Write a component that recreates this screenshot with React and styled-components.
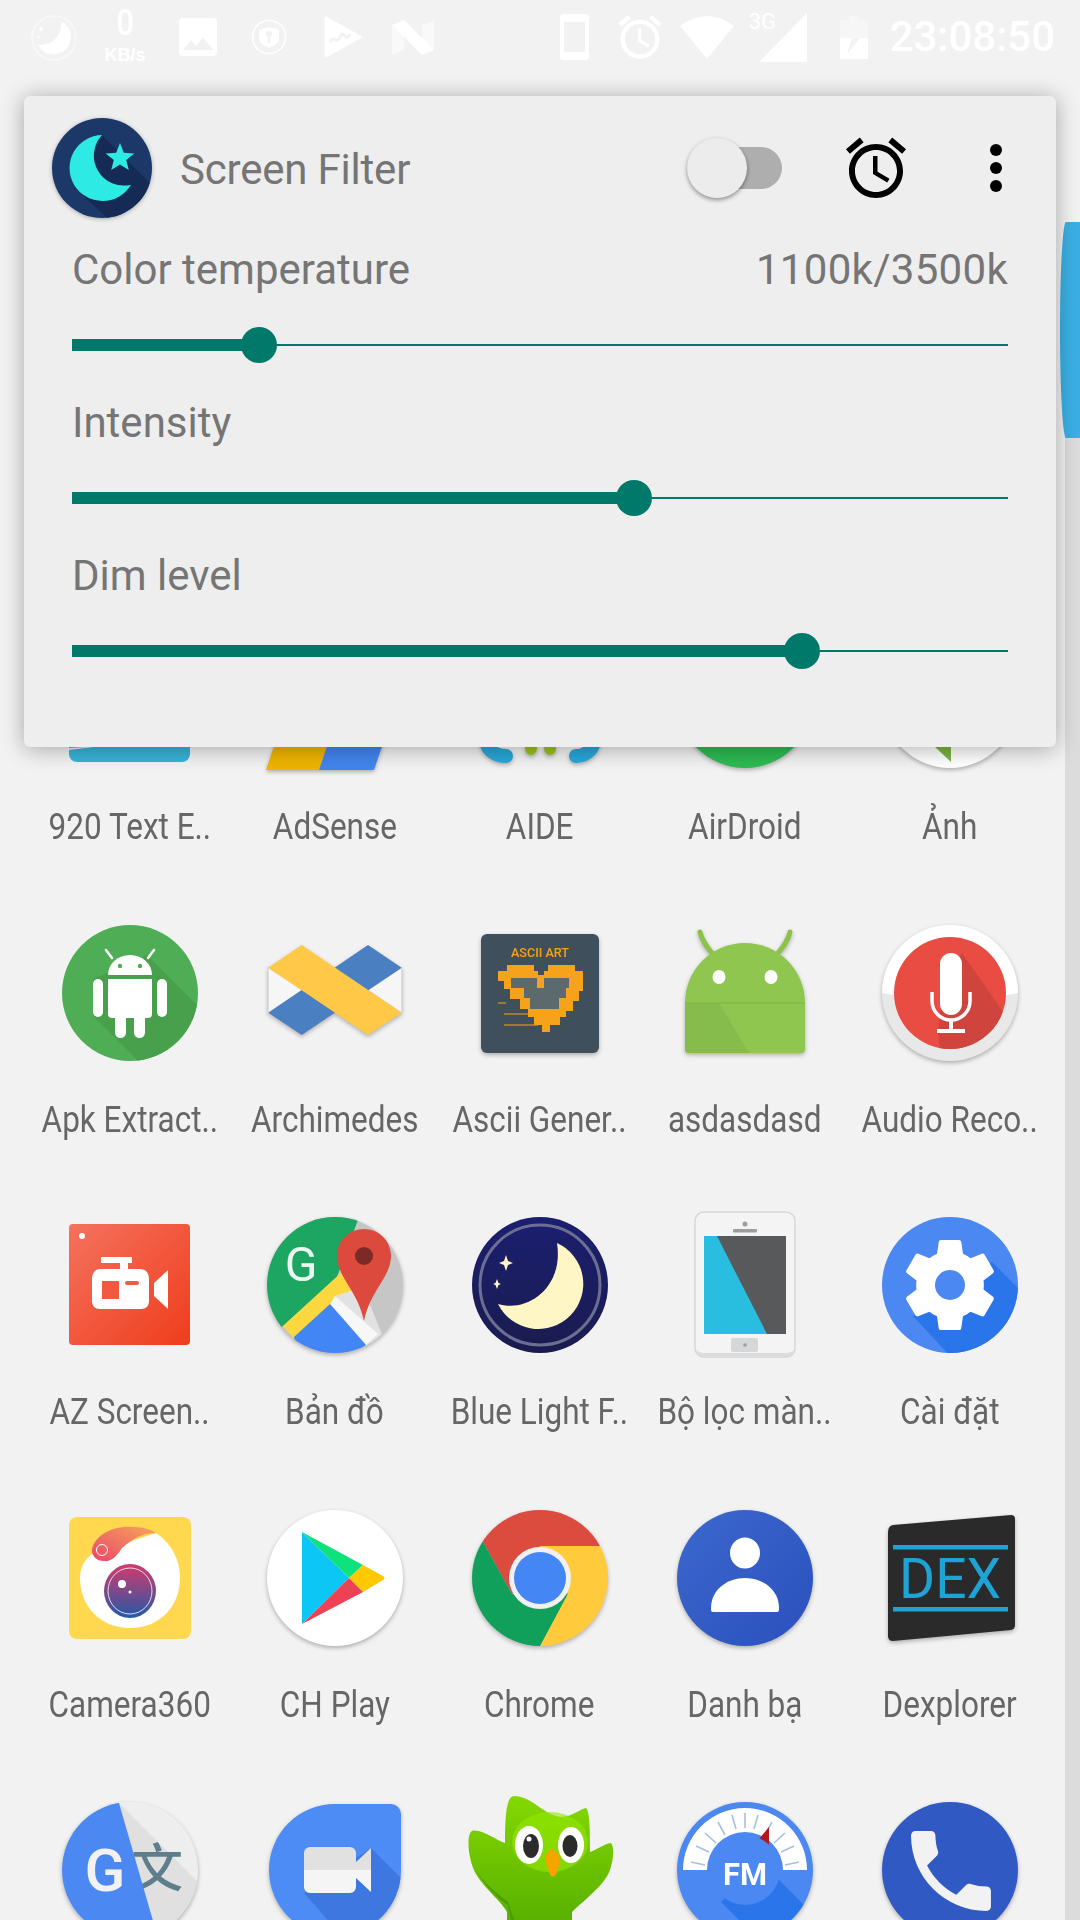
// node modules
import React from 'react';
import styled, { createGlobalStyle } from 'styled-components';

const GlobalStyle = createGlobalStyle`
    html, body {
        margin: 0;
        padding: 0;
        background: #f2f2f2;
        font-family: Roboto, "Noto Sans", sans-serif;
    }
`;

// styled css components
const Page = styled.div`
    position: relative;
    width: 1080px;
    height: 1920px;
    overflow: hidden;
    background: #f2f2f2;
`;
const StatusBar = styled.div`
    display: flex;
    align-items: center;
    height: 74px;
    padding: 0 25px 0 31px;
    box-sizing: border-box;
    color: #fff;
`;
const StatusIcon = styled.svg`
    display: block;
    flex: none;
    margin-left: ${props => props.$gap || 0}px;
    fill: #fff;
`;
const NetSpeed = styled.div`
    display: flex;
    flex-direction: column;
    align-items: center;
    width: 50px;
    margin: -3px 0 0 24px;
`;
const NetValue = styled.span`
    font-size: 36px;
    line-height: 32px;
    font-weight: 500;
    transform: scaleX(0.85);
`;
const NetUnit = styled.span`
    margin-top: 6px;
    font-size: 18px;
    line-height: 20px;
    font-weight: 700;
    font-family: "Liberation Sans", sans-serif;
    white-space: nowrap;
`;
const StatusRight = styled.div`
    display: flex;
    align-items: center;
    margin-left: auto;
`;
const SignalWrap = styled.div`
    position: relative;
    width: 48px;
    height: 49px;
    margin-left: 25px;
`;
const NetType = styled.span`
    position: absolute;
    left: -10px;
    top: -3px;
    font-size: 22px;
    line-height: 24px;
`;
const Clock = styled.span`
    margin-left: 22px;
    font-size: 42px;
    line-height: 50px;
    font-weight: 500;
`;

const Grid = styled.div`
    display: grid;
    grid-template-columns: repeat(5, 205px);
    grid-auto-rows: 292.5px;
    margin-top: 558px;
    padding-left: 27px;
`;
const Cell = styled.div`
    display: flex;
    flex-direction: column;
    align-items: center;
`;
const AppIcon = styled.svg`
    display: block;
    flex: none;
    width: 136px;
    height: 136px;
    overflow: visible;
    filter: ${props => props.$flat ? 'none' : 'drop-shadow(0 2px 2px rgba(0, 0, 0, 0.28))'};
`;
const CellLabel = styled.span`
    margin-top: 35px;
    font-size: 36px;
    line-height: 48px;
    color: #666;
    white-space: nowrap;
    transform: scaleX(0.875);
`;

const ScrollTrack = styled.div`
    position: absolute;
    right: 0;
    top: 222px;
    bottom: 0;
    width: 15px;
    background: #dcdcdc;
`;
const ScrollThumb = styled.div`
    position: absolute;
    right: 0;
    top: 222px;
    width: 20px;
    height: 216px;
    background: #3bafe3;
    border-radius: 6px 0 0 6px / 50% 0 0 50%;
`;

const Panel = styled.div`
    position: absolute;
    left: 24px;
    top: 96px;
    width: 1032px;
    height: 651px;
    box-sizing: border-box;
    background: #eee;
    border-radius: 6px;
    box-shadow: 0 2px 22px rgba(0, 0, 0, 0.32);
`;
const PanelHeader = styled.div`
    display: flex;
    align-items: center;
    padding: 22px 54px 0 28px;
`;
const Logo = styled.svg`
    display: block;
    flex: none;
    width: 100px;
    height: 100px;
    filter: drop-shadow(0 1px 2px rgba(0, 0, 0, 0.3));
`;
const Title = styled.span`
    margin: 4px 0 0 28px;
    font-size: 42px;
    line-height: 50px;
    letter-spacing: -0.2px;
    color: #757575;
`;
const Toggle = styled.div`
    position: relative;
    flex: none;
    width: 95px;
    height: 60px;
    margin-left: auto;
`;
const ToggleTrack = styled.div`
    position: absolute;
    right: 0;
    top: 9px;
    width: 82px;
    height: 42px;
    border-radius: 21px;
    background: #aeaeae;
`;
const ToggleThumb = styled.div`
    position: absolute;
    left: 0;
    top: 0;
    width: 60px;
    height: 60px;
    border-radius: 50%;
    background: #ececec;
    box-shadow: 0 2px 4px rgba(0, 0, 0, 0.4);
`;
const AlarmIcon = styled.svg`
    display: block;
    flex: none;
    width: 72px;
    height: 72px;
    margin-left: 58px;
    fill: #000;
`;
const MoreDots = styled.div`
    display: flex;
    flex-direction: column;
    gap: 6px;
    margin-left: 78px;
`;
const Dot = styled.span`
    display: block;
    width: 12px;
    height: 12px;
    border-radius: 50%;
    background: #000;
`;
const Sliders = styled.div`
    display: flex;
    flex-direction: column;
    gap: 36px;
    padding: 28px 48px 0;
`;
const SliderBlock = styled.div`
    display: flex;
    flex-direction: column;
    gap: 32px;
`;
const SliderHead = styled.div`
    display: flex;
    justify-content: space-between;
    margin-top: -1px;
    font-size: 42px;
    line-height: 50px;
    color: #757575;
`;
const SliderValue = styled.span`
    letter-spacing: 0.3px;
`;
const Track = styled.div`
    position: relative;
    height: 36px;
    &::before {
        content: '';
        position: absolute;
        left: 0;
        right: 0;
        top: 17px;
        height: 2px;
        background: #00796b;
    }
`;
const TrackFill = styled.div`
    position: absolute;
    left: 0;
    top: 12px;
    height: 12px;
    background: #00796b;
`;
const TrackThumb = styled.div`
    position: absolute;
    top: 0;
    width: 36px;
    height: 36px;
    margin-left: -18px;
    border-radius: 50%;
    background: #00796b;
`;

const SANS = 'Roboto, sans-serif';

// status bar drawings
const StatusMoon = () => (
    <StatusIcon width="45" height="47" viewBox="0 0 45 47">
        <circle cx="23" cy="24" r="22" fill="none" stroke="#fff" strokeOpacity="0.45" strokeWidth="2" />
        <path d="M30 7A17.5 17.5 0 1 1 7 31A21 21 0 0 0 30 7z" />
        <circle cx="10" cy="15" r="2" />
        <circle cx="7" cy="23" r="1" />
    </StatusIcon>
);
const StatusImage = () => (
    <StatusIcon $gap={29} width="38" height="38" viewBox="0 0 38 38">
        <rect width="38" height="38" rx="4" />
        <path d="M4 32L12 22L17 28L24 19L34 32z" fill="#f2f2f2" />
    </StatusIcon>
);
const StatusShield = () => (
    <StatusIcon $gap={34} width="36" height="36" viewBox="0 0 36 36">
        <circle cx="18" cy="18" r="16.5" fill="none" stroke="#fff" strokeWidth="1.5" />
        <path d="M18 8L28 11V20C28 24 23 27 18 29C13 27 8 24 8 20V11z" />
        <circle cx="18" cy="15" r="3" fill="#f2f2f2" />
        <rect x="17" y="17" width="2" height="7" fill="#f2f2f2" />
    </StatusIcon>
);
const StatusPlay = () => (
    <StatusIcon $gap={37} width="38" height="42" viewBox="0 0 38 42">
        <path d="M2 2L36 21L2 40z" stroke="#fff" strokeWidth="3" strokeLinejoin="round" />
        <path d="M6 26C10 18 12 30 16 21S22 28 26 18" fill="none" stroke="#f2f2f2" strokeWidth="3" />
    </StatusIcon>
);
const StatusN = () => (
    <StatusIcon $gap={30} width="43" height="35" viewBox="0 0 43 35">
        <path d="M0 5L12 0V30L0 35z" fillOpacity="0.5" />
        <path d="M30 5L42 0V30L30 35z" fillOpacity="0.5" />
        <path d="M0 5L12 0L42 30L30 35z" />
    </StatusIcon>
);
const StatusPhone = () => (
    <StatusIcon width="29" height="46" viewBox="0 0 29 46">
        <rect width="29" height="46" rx="3" />
        <rect x="4" y="8" width="21" height="30" fill="#f2f2f2" />
    </StatusIcon>
);
const StatusAlarm = () => (
    <StatusIcon $gap={25} width="52" height="52" viewBox="0 0 24 24">
        <path d="M22 5.72l-4.6-3.86-1.29 1.53 4.6 3.86L22 5.72zM7.88 3.39L6.6 1.86 2 5.71l1.29 1.53 4.59-3.85zM12.5 8H11v6l4.75 2.85.75-1.23-4-2.37V8zM12 4c-4.97 0-9 4.03-9 9s4.03 9 9 9 9-4.03 9-9-4.03-9-9-9zm0 16c-3.87 0-7-3.13-7-7s3.13-7 7-7 7 3.13 7 7-3.13 7-7 7z" />
    </StatusIcon>
);
const StatusWifi = () => (
    <StatusIcon $gap={14} width="54" height="43" viewBox="0 0 54 43">
        <path d="M0 10Q27 -10 54 10L27 43z" />
    </StatusIcon>
);
const StatusBattery = () => (
    <StatusIcon $gap={33} width="28" height="43" viewBox="0 0 28 43">
        <path d="M9 0H19V4H28V22H0V4H9z" fillOpacity="0.35" />
        <path d="M0 22H12L7 38L20 22H28V43H0z" />
    </StatusIcon>
);

// row 1, mostly behind the panel
const TextEditorIcon = () => (
    <AppIcon viewBox="0 0 136 136" $flat>
        <rect x="7" y="8" width="121" height="122" rx="8" fill="#38b4d8" />
        <path d="M7 118L40 114L7 116z" fill="#eee" />
    </AppIcon>
);
const AdSenseIcon = () => (
    <AppIcon viewBox="0 0 136 136">
        <path d="M-1 138H52L75 70H22z" fill="#f0b400" />
        <path d="M52 138H107L130 70H75z" fill="#4285ee" />
    </AppIcon>
);
const AideIcon = () => (
    <AppIcon viewBox="0 0 136 136">
        <path d="M16 100C10 116 22 124 34 124" fill="none" stroke="#27a7d8" strokeWidth="14" strokeLinecap="round" />
        <path d="M120 100C126 116 114 124 104 124" fill="none" stroke="#27a7d8" strokeWidth="14" strokeLinecap="round" />
        <ellipse cx="59" cy="116" rx="6" ry="7" fill="#9ac21c" />
        <ellipse cx="78" cy="116" rx="6" ry="7" fill="#9ac21c" />
    </AppIcon>
);
const AirDroidIcon = () => (
    <AppIcon viewBox="0 0 136 136">
        <circle cx="68" cy="68" r="68" fill="#2dba52" />
    </AppIcon>
);
const PhotosIcon = () => (
    <AppIcon viewBox="0 0 136 136">
        <circle cx="68" cy="68" r="68" fill="#fff" />
        <path d="M52 114L69 130V80z" fill="#7cb342" />
    </AppIcon>
);

// row 2
const ApkIcon = () => (
    <AppIcon viewBox="0 0 136 136" $flat>
        <defs>
            <clipPath id="apkClip"><circle cx="68" cy="68" r="68" /></clipPath>
        </defs>
        <circle cx="68" cy="68" r="68" fill="#4fae55" />
        <path d="M85 30L140 85V140H80L31 91V54z" fill="#48a04d" clipPath="url(#apkClip)" />
        <path d="M46 50A22 20 0 0 1 90 50z" fill="#fff" />
        <path d="M50 33L44 25M86 33L92 25" stroke="#fff" strokeWidth="2.5" strokeLinecap="round" />
        <circle cx="58" cy="41" r="2.2" fill="#4fae55" />
        <circle cx="78" cy="41" r="2.2" fill="#4fae55" />
        <path d="M46 54H90V89A4 4 0 0 1 86 93H50A4 4 0 0 1 46 89z" fill="#fff" />
        <rect x="31" y="54" width="10" height="38" rx="5" fill="#fff" />
        <rect x="95" y="54" width="10" height="38" rx="5" fill="#fff" />
        <rect x="53" y="88" width="11" height="25" rx="5.5" fill="#fff" />
        <rect x="72" y="88" width="11" height="25" rx="5.5" fill="#fff" />
    </AppIcon>
);
const ArchimedesIcon = () => (
    <AppIcon viewBox="0 0 136 136">
        <path d="M1.3 42.7L35 65L1.3 87.7zM134.7 42.7L101 65L134.7 87.7z" fill="#f6f6f6" stroke="#cfcfcf" strokeWidth="0.7" />
        <path d="M101 20L134.7 42.7L34.7 110L1.3 87.7z" fill="#4a7fc1" />
        <path d="M34.7 20L134.7 87.7L101 110L1.3 42.7z" fill="#ffc947" />
    </AppIcon>
);
const AsciiIcon = () => (
    <AppIcon viewBox="0 0 136 136">
        <rect x="9" y="9" width="118" height="119" rx="6" fill="#3f505c" />
        <text x="68" y="32" textAnchor="middle" fontFamily={SANS} fontSize="13" fontWeight="500" textLength="58" lengthAdjust="spacingAndGlyphs" fill="#f7a21b">ASCII ART</text>
        <path d="M35 40H62V46H66V50H72V46H76V40H103V46H111V66H107V76H101V86H94V92H88V100H78V107H70V100H62V92H56V84H48V74H38V64H32V56H26V46H35z" fill="#f7a21b" />
        <rect x="39" y="53" width="26" height="10" fill="#5c6a6e" />
        <rect x="72" y="53" width="25" height="10" fill="#5c6a6e" />
        <rect x="52" y="63" width="42" height="10" fill="#5c6a6e" />
        <rect x="58" y="73" width="29" height="11" fill="#5c6a6e" />
        <path d="M26 78H34M32 89H56M32 100H66" stroke="#f7a21b" strokeWidth="1.2" fill="none" />
    </AppIcon>
);
const AsdIcon = () => (
    <AppIcon viewBox="0 0 136 136">
        <path d="M35 28C30 22 25 16 23 7M101 28C106 22 111 16 113 7" fill="none" stroke="#8bc34a" strokeWidth="5" strokeLinecap="round" />
        <path d="M8 78A60 60 0 0 1 128 78V124A4 4 0 0 1 124 128H12A4 4 0 0 1 8 124z" fill="#8fc64f" />
        <path d="M8 78H42L72 128H12A4 4 0 0 1 8 124z" fill="#85bc4b" />
        <path d="M8 78H128" stroke="#7fb146" strokeWidth="1" />
        <ellipse cx="42" cy="52" rx="6.5" ry="7" fill="#fff" />
        <ellipse cx="94" cy="52" rx="6.5" ry="7" fill="#fff" />
    </AppIcon>
);
const AudioIcon = () => (
    <AppIcon viewBox="0 0 136 136">
        <defs>
            <clipPath id="audioClip"><circle cx="68" cy="68" r="56" /></clipPath>
        </defs>
        <circle cx="68" cy="68" r="68" fill="#e8e8e8" />
        <path d="M0 68A68 68 0 0 1 136 68L68 80z" fill="#fff" />
        <circle cx="68" cy="68" r="56" fill="#e94c43" />
        <path d="M80 28L130 100L100 140H60L56 108L60 70z" fill="#cf443c" clipPath="url(#audioClip)" />
        <rect x="58" y="28" width="22" height="62" rx="11" fill="#fff" />
        <path d="M50 67V76A19 19 0 0 0 88 76V67" fill="none" stroke="#fff" strokeWidth="3.5" />
        <rect x="67" y="94" width="4" height="12" fill="#fff" />
        <rect x="55" y="104" width="28" height="4" fill="#fff" />
    </AppIcon>
);

// row 3
const AzIcon = () => (
    <AppIcon viewBox="0 0 136 136" $flat>
        <defs>
            <linearGradient id="azGrad" x1="0" y1="0" x2="1" y2="1">
                <stop offset="0" stopColor="#f4725e" />
                <stop offset="1" stopColor="#ef3d1c" />
            </linearGradient>
        </defs>
        <rect x="7" y="7" width="121" height="121" rx="4" fill="url(#azGrad)" />
        <circle cx="20" cy="19" r="3" fill="#fff" />
        <path d="M39 40H70V46H66V52H78C84 52 87 56 87 62V84C87 89 84 92 79 92H38C33 92 30 89 30 84V62C30 56 33 52 38 52H58V46H39z" fill="#fff" />
        <rect x="40" y="64" width="17" height="18" fill="#f15a40" />
        <rect x="63" y="64" width="14" height="4" rx="2" fill="#f15a40" />
        <path d="M92 66L106 53V92L92 79z" fill="#fff" />
    </AppIcon>
);
const MapsIcon = () => (
    <AppIcon viewBox="0 0 136 136">
        <defs>
            <clipPath id="mapsClip"><circle cx="68" cy="68" r="68" /></clipPath>
        </defs>
        <g clipPath="url(#mapsClip)">
            <rect width="136" height="136" fill="#c6c6c6" />
            <path d="M0 0H92L70 60L16 109L0 120z" fill="#1da562" />
            <path d="M76 54L86 78L27 122L16 109z" fill="#fdd73f" />
            <path d="M68 79L96 70L120 130L100 136z" fill="#e2e2e2" />
            <path d="M63 87L68 79L111 117L99 128z" fill="#f7f7f7" />
            <path d="M63 87L99 128L90 136H30L27 120z" fill="#4285f4" />
        </g>
        <path d="M97 12C112 12 124 24 124 39C124 60 103 74 97 104C91 74 70 60 70 39C70 24 82 12 97 12z" fill="#dc4a3d" />
        <circle cx="97" cy="39" r="9" fill="#7d2a25" />
        <text x="34" y="64" textAnchor="middle" fontFamily={SANS} fontSize="48" fontWeight="400" fill="#fff" opacity="0.92">G</text>
    </AppIcon>
);
const BlueLightIcon = () => (
    <AppIcon viewBox="0 0 136 136" $flat>
        <defs>
            <linearGradient id="blueGrad" x1="0" y1="0" x2="0" y2="1">
                <stop offset="0" stopColor="#1b1f70" />
                <stop offset="1" stopColor="#1a1c4e" />
            </linearGradient>
        </defs>
        <circle cx="68" cy="68" r="68" fill="url(#blueGrad)" />
        <circle cx="68" cy="68" r="60" fill="none" stroke="#6d6e93" strokeWidth="3" />
        <path d="M85 26A45 45 0 1 1 26 87C56 96 92 70 85 26z" fill="#fff5c5" />
        <path d="M34 38L36 44L41 46L36 48L34 54L32 48L27 46L32 44z" fill="#fff5c5" />
        <path d="M25 62L26.5 66L29 67L26.5 68L25 72L23.5 68L21 67L23.5 66z" fill="#fff5c5" />
    </AppIcon>
);
const FilterIcon = () => (
    <AppIcon viewBox="0 0 136 136" $flat>
        <rect x="18" y="-5" width="100" height="145" rx="9" fill="#f4f4f4" stroke="#d6d6d6" strokeWidth="1.5" />
        <path d="M18.8 130C20 138 24 139.5 27 139.5H109C112 139.5 116 138 117.2 130V131C116 135 112 136 109 136H27C24 136 20 135 18.8 131z" fill="#dcdcdc" />
        <circle cx="68" cy="7" r="2.5" fill="#9a9ea2" />
        <rect x="56" y="12" width="24" height="3.5" rx="1" fill="#9a9ea2" />
        <rect x="27" y="19" width="82" height="98" fill="#58595b" />
        <path d="M27 19H40L90 117H27z" fill="#29bde0" />
        <rect x="54" y="121" width="27" height="14" rx="2" fill="#d5d7d9" />
        <circle cx="68" cy="128" r="1.8" fill="#9a9ea2" />
    </AppIcon>
);
const SettingsIcon = () => (
    <AppIcon viewBox="0 0 136 136" $flat>
        <defs>
            <clipPath id="setClip"><circle cx="68" cy="68" r="68" /></clipPath>
        </defs>
        <circle cx="68" cy="68" r="68" fill="#4b88f1" />
        <path d="M110 45L140 75V140H69L31 99L68 68z" fill="#2a75ea" clipPath="url(#setClip)" />
        <g transform="translate(11.6 11.6) scale(4.7)">
            <path fill="#fff" d="M19.14 12.94c.04-.3.06-.61.06-.94 0-.32-.02-.64-.07-.94l2.03-1.58c.18-.14.23-.41.12-.61l-1.92-3.32c-.12-.22-.37-.29-.59-.22l-2.39.96c-.5-.38-1.03-.7-1.62-.94l-.36-2.54c-.04-.24-.24-.41-.48-.41h-3.84c-.24 0-.43.17-.47.41l-.36 2.54c-.59.24-1.13.57-1.62.94l-2.39-.96c-.22-.08-.47 0-.59.22L2.74 8.87c-.12.21-.08.47.12.61l2.03 1.58c-.05.3-.09.63-.09.94s.02.64.07.94l-2.03 1.58c-.18.14-.23.41-.12.61l1.92 3.32c.12.22.37.29.59.22l2.39-.96c.5.38 1.03.7 1.62.94l.36 2.54c.05.24.24.41.48.41h3.84c.24 0 .44-.17.47-.41l.36-2.54c.59-.24 1.13-.56 1.62-.94l2.39.96c.22.08.47 0 .59-.22l1.92-3.32c.12-.22.07-.47-.12-.61l-2.01-1.58z" />
        </g>
        <circle cx="68" cy="68" r="15" fill="#4b88f1" />
    </AppIcon>
);

// row 4
const Camera360Icon = () => (
    <AppIcon viewBox="0 0 136 136" $flat>
        <defs>
            <linearGradient id="camLens" x1="0" y1="0" x2="0" y2="1">
                <stop offset="0" stopColor="#d43a6c" />
                <stop offset="1" stopColor="#2459a8" />
            </linearGradient>
            <linearGradient id="camTail" x1="0" y1="1" x2="1" y2="0">
                <stop offset="0" stopColor="#e9476a" />
                <stop offset="1" stopColor="#f7a659" />
            </linearGradient>
        </defs>
        <rect x="7" y="7" width="122" height="122" rx="8" fill="#ffd84f" />
        <path d="M94 23C110 34 118 50 118 68C118 96 98 118 68 118C38 118 18 96 18 68C18 58 22 50 30 44z" fill="#fff" />
        <path d="M30 40C32 26 50 15 72 17C82 17 90 20 94 23C78 23 70 30 60 38C54 48 48 52 42 51C34 51 30 46 30 40z" fill="url(#camTail)" />
        <circle cx="40" cy="40" r="5.5" fill="none" stroke="#fff" strokeWidth="1" />
        <ellipse cx="68" cy="81" rx="26" ry="27" fill="url(#camLens)" />
        <ellipse cx="68" cy="81" rx="22" ry="23" fill="none" stroke="#fff" strokeWidth="0.8" />
        <circle cx="60" cy="74" r="4" fill="#fff" />
        <circle cx="68" cy="82" r="1.5" fill="#fff" />
    </AppIcon>
);
const PlayIcon = () => (
    <AppIcon viewBox="0 0 136 136">
        <circle cx="68" cy="68" r="68" fill="#fff" />
        <path d="M35 22L82 68L35 114z" fill="#0cc6f6" />
        <path d="M35 22L96 55L82 68z" fill="#0ee27c" />
        <path d="M96 55L116 66Q119 68 116 70L96 82L82 68z" fill="#ffc900" />
        <path d="M35 114L82 68L96 82z" fill="#ee4154" />
    </AppIcon>
);
const ChromeIcon = () => (
    <AppIcon viewBox="0 0 136 136">
        <defs>
            <clipPath id="chromeClip"><circle cx="68" cy="68" r="68" /></clipPath>
        </defs>
        <g clipPath="url(#chromeClip)">
            <path d="M10 30L40 84L68 36H136V-5H10z" fill="#dc4c3e" />
            <path d="M10 30L40 84L96 84L66 140H-5V30z" fill="#10a05b" />
            <path d="M68 36H136V140H66L96 84z" fill="#ffcb3d" />
        </g>
        <circle cx="68" cy="68" r="31" fill="#f1f1f1" />
        <circle cx="68" cy="68" r="26" fill="#4486f4" />
    </AppIcon>
);
const ContactsIcon = () => (
    <AppIcon viewBox="0 0 136 136">
        <defs>
            <linearGradient id="contGrad" x1="0" y1="0" x2="1" y2="1">
                <stop offset="0" stopColor="#3c68cd" />
                <stop offset="1" stopColor="#2a50bd" />
            </linearGradient>
        </defs>
        <circle cx="68" cy="68" r="68" fill="url(#contGrad)" />
        <ellipse cx="68" cy="43" rx="15" ry="15.5" fill="#fff" />
        <path d="M34 98C34 80 50 68 68 68S102 80 102 98V100Q102 102 100 102H36Q34 102 34 100z" fill="#fff" />
    </AppIcon>
);
const DexIcon = () => (
    <AppIcon viewBox="0 0 136 136">
        <path d="M6 22Q6 16 11 15L129 5Q133 5 133 9V115Q133 119 129 120L11 131Q6 131 6 126z" fill="#2a2a2a" />
        <rect x="11" y="35" width="115" height="4.5" fill="#1fa2d4" />
        <rect x="11" y="97" width="115" height="4.5" fill="#1fa2d4" />
        <text x="17" y="88" fontFamily={SANS} fontSize="55" fontWeight="400" textLength="102" lengthAdjust="spacingAndGlyphs" fill="#1fa2d4">DEX</text>
    </AppIcon>
);

// row 5, cut by the screen edge
const TranslateIcon = () => (
    <AppIcon viewBox="0 0 136 136">
        <defs>
            <clipPath id="trClip"><circle cx="68" cy="68" r="68" /></clipPath>
        </defs>
        <circle cx="68" cy="68" r="68" fill="#eee" />
        <path d="M57 1L136 80V136H96z" fill="#e0e0e0" clipPath="url(#trClip)" />
        <text x="95" y="85" textAnchor="middle" fontFamily={'"Noto Sans CJK SC", sans-serif'} fontSize="52" fontWeight="500" fill="#607d8b">文</text>
        <path d="M57 1L96 136H0V0z" fill="#4b88f1" clipPath="url(#trClip)" />
        <text x="43" y="89" textAnchor="middle" fontFamily={SANS} fontSize="60" fontWeight="500" fill="#f2f2f2">G</text>
    </AppIcon>
);
const DuoIcon = () => (
    <AppIcon viewBox="0 0 136 136">
        <defs>
            <clipPath id="duoClip"><path d="M68 2H124A10 10 0 0 1 134 12V68A66 66 0 1 1 2 68A66 66 0 0 1 68 2z" /></clipPath>
        </defs>
        <path d="M68 2H124A10 10 0 0 1 134 12V68A66 66 0 1 1 2 68A66 66 0 0 1 68 2z" fill="#4d8cf5" />
        <path d="M104 46L140 82V140H80L37 91z" fill="#3f77e0" clipPath="url(#duoClip)" />
        <path d="M37 68V51A6 6 0 0 1 43 45H83A6 6 0 0 1 89 51V60L104 46V68z" fill="#e1e1e1" />
        <path d="M37 68V85A6 6 0 0 0 43 91H83A6 6 0 0 0 89 85V76L104 90V68z" fill="#f5f5f5" />
    </AppIcon>
);
const OwlIcon = () => (
    <AppIcon viewBox="0 0 136 136" $flat>
        <defs>
            <linearGradient id="owlGrad" x1="0" y1="0" x2="0" y2="1">
                <stop offset="0" stopColor="#84d800" />
                <stop offset="1" stopColor="#52aa00" />
            </linearGradient>
        </defs>
        <path d="M42 -6C35 -6 33 10 33 41C24 38 8 26 0 29C-6 32 -4 58 4 72C12 86 30 100 35 110V140H100V110C112 98 132 84 138 68C142 56 142 44 139 41C132 42 124 48 118 50C118 30 118 10 114 6C106 8 96 18 84 14C70 10 58 -6 42 -6z" fill="url(#owlGrad)" />
        <path d="M36 100C20 88 6 76 0 60C8 80 26 96 36 103C38 112 40 128 46 140H54C44 126 40 112 36 100z" fill="#4c9a00" />
        <ellipse cx="78" cy="40" rx="38" ry="30" fill="#95e800" opacity="0.6" />
        <ellipse cx="57" cy="43" rx="14" ry="19" fill="#fff" />
        <ellipse cx="99" cy="43" rx="13" ry="18" fill="#fff" />
        <ellipse cx="59" cy="44" rx="8" ry="12" fill="#2b2b2b" />
        <ellipse cx="98" cy="44" rx="7.5" ry="11" fill="#2b2b2b" />
        <circle cx="57" cy="37" r="2.5" fill="#fff" />
        <path d="M80 47C88 49 89 60 85 70C83 76 79 76 77 70C73 60 72 49 80 47z" fill="#f7a400" />
    </AppIcon>
);
const FmIcon = () => (
    <AppIcon viewBox="0 0 136 136">
        <defs>
            <clipPath id="fmClip"><circle cx="68" cy="68" r="68" /></clipPath>
        </defs>
        <circle cx="68" cy="68" r="68" fill="#4b88f1" />
        <path d="M84 60L136 112V136H80L44 100z" fill="#2a75ea" clipPath="url(#fmClip)" />
        <path d="M6 68A62 62 0 0 1 130 68H106A38 38 0 0 0 30 68z" fill="#fff" />
        <path d="M14 60L28 63M19 44L32 50M28 31L39 41M41 20L48 33M55 13L59 27M68 11V26M81 13L77 27M95 20L88 33M108 31L97 41M117 44L104 50M122 60L108 63" stroke="#a6bfe6" strokeWidth="1.6" />
        <path d="M82 37L92 25L92 45z" fill="#b3161b" />
        <circle cx="68" cy="68" r="35" fill="#4b88f1" />
        <text x="68" y="83" textAnchor="middle" fontFamily={SANS} fontSize="32" fontWeight="700" textLength="44" lengthAdjust="spacingAndGlyphs" fill="#fff">FM</text>
    </AppIcon>
);
const DialerIcon = () => (
    <AppIcon viewBox="0 0 136 136">
        <circle cx="68" cy="68" r="68" fill="#3059c4" />
        <g transform="translate(15.7 15.7) scale(4.44)">
            <path fill="#f2f2f2" d="M6.62 10.79c1.44 2.83 3.76 5.14 6.59 6.59l2.2-2.2c.27-.27.67-.36 1.02-.24 1.12.37 2.33.57 3.57.57.55 0 1 .45 1 1V20c0 .55-.45 1-1 1-9.39 0-17-7.61-17-17 0-.55.45-1 1-1h3.5c.55 0 1 .45 1 1 0 1.25.2 2.45.57 3.57.11.35.03.74-.25 1.02l-2.2 2.2z" />
        </g>
    </AppIcon>
);

const apps = [
    { label: '920 Text E..', Icon: TextEditorIcon },
    { label: 'AdSense', Icon: AdSenseIcon },
    { label: 'AIDE', Icon: AideIcon },
    { label: 'AirDroid', Icon: AirDroidIcon },
    { label: 'Ảnh', Icon: PhotosIcon },
    { label: 'Apk Extract..', Icon: ApkIcon },
    { label: 'Archimedes', Icon: ArchimedesIcon },
    { label: 'Ascii Gener..', Icon: AsciiIcon },
    { label: 'asdasdasd', Icon: AsdIcon },
    { label: 'Audio Reco..', Icon: AudioIcon },
    { label: 'AZ Screen..', Icon: AzIcon },
    { label: 'Bản đồ', Icon: MapsIcon },
    { label: 'Blue Light F..', Icon: BlueLightIcon },
    { label: 'Bộ lọc màn..', Icon: FilterIcon },
    { label: 'Cài đặt', Icon: SettingsIcon },
    { label: 'Camera360', Icon: Camera360Icon },
    { label: 'CH Play', Icon: PlayIcon },
    { label: 'Chrome', Icon: ChromeIcon },
    { label: 'Danh bạ', Icon: ContactsIcon },
    { label: 'Dexplorer', Icon: DexIcon },
    { label: '', Icon: TranslateIcon },
    { label: '', Icon: DuoIcon },
    { label: '', Icon: OwlIcon },
    { label: '', Icon: FmIcon },
    { label: '', Icon: DialerIcon },
];

const sliders = [
    { label: 'Color temperature', value: '1100k/3500k', percent: 20 },
    { label: 'Intensity', percent: 60 },
    { label: 'Dim level', percent: 78 },
];

const App = () => {
    return (
        <>
            <GlobalStyle />
            <Page>
                <StatusBar>
                    <StatusMoon />
                    <NetSpeed>
                        <NetValue>0</NetValue>
                        <NetUnit>KB/s</NetUnit>
                    </NetSpeed>
                    <StatusImage />
                    <StatusShield />
                    <StatusPlay />
                    <StatusN />
                    <StatusRight>
                        <StatusPhone />
                        <StatusAlarm />
                        <StatusWifi />
                        <SignalWrap>
                            <StatusIcon width="48" height="49" viewBox="0 0 48 49">
                                <path d="M48 0V49H0z" />
                            </StatusIcon>
                            <NetType>3G</NetType>
                        </SignalWrap>
                        <StatusBattery />
                        <Clock>23:08:50</Clock>
                    </StatusRight>
                </StatusBar>

                <Grid>
                    {apps.map(({ label, Icon }, i) => (
                        <Cell key={i}>
                            <Icon />
                            {label && <CellLabel>{label}</CellLabel>}
                        </Cell>
                    ))}
                </Grid>

                <ScrollTrack />
                <ScrollThumb />

                <Panel>
                    <PanelHeader>
                        <Logo viewBox="0 0 100 100">
                            <defs>
                                <clipPath id="logoClip"><circle cx="50" cy="50" r="50" /></clipPath>
                            </defs>
                            <circle cx="50" cy="50" r="50" fill="#1b3868" />
                            <path d="M50 17L100 67V100H55L25 72z" fill="#152b55" clipPath="url(#logoClip)" />
                            <path d="M50 17A33 33 0 1 0 79 66.7A30 30 0 0 1 50 17z" fill="#2eeae4" />
                            <path d="M68 25L71.8 34.7L82.3 35.4L74.2 42L76.8 52.1L68 46.5L59.2 52.1L61.8 42L53.7 35.4L64.2 34.7z" fill="#2eeae4" />
                        </Logo>
                        <Title>Screen Filter</Title>
                        <Toggle>
                            <ToggleTrack />
                            <ToggleThumb />
                        </Toggle>
                        <AlarmIcon viewBox="0 0 24 24">
                            <path d="M22 5.72l-4.6-3.86-1.29 1.53 4.6 3.86L22 5.72zM7.88 3.39L6.6 1.86 2 5.71l1.29 1.53 4.59-3.85zM12.5 8H11v6l4.75 2.85.75-1.23-4-2.37V8zM12 4c-4.97 0-9 4.03-9 9s4.03 9 9 9 9-4.03 9-9-4.03-9-9-9zm0 16c-3.87 0-7-3.13-7-7s3.13-7 7-7 7 3.13 7 7-3.13 7-7 7z" />
                        </AlarmIcon>
                        <MoreDots>
                            <Dot />
                            <Dot />
                            <Dot />
                        </MoreDots>
                    </PanelHeader>
                    <Sliders>
                        {sliders.map(({ label, value, percent }) => (
                            <SliderBlock key={label}>
                                <SliderHead>
                                    <span>{label}</span>
                                    {value && <SliderValue>{value}</SliderValue>}
                                </SliderHead>
                                <Track>
                                    <TrackFill style={{ width: `${percent}%` }} />
                                    <TrackThumb style={{ left: `${percent}%` }} />
                                </Track>
                            </SliderBlock>
                        ))}
                    </Sliders>
                </Panel>
            </Page>
        </>
    );
};

export default App;
